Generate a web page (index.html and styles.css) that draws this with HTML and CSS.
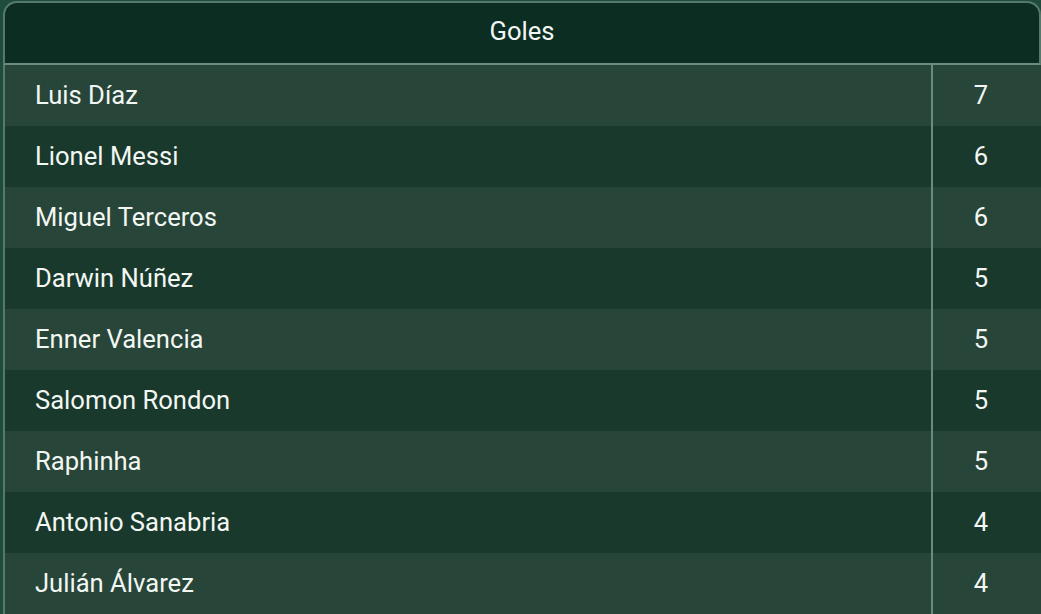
FILE: index.html
```html
<!DOCTYPE html>
<html lang="es">
<head>
<meta charset="utf-8">
<title>Goles</title>
<link rel="stylesheet" href="styles.css">
</head>
<body>
<div class="wrap">
<table class="scorers">
  <thead>
    <tr><th colspan="2">Goles</th></tr>
  </thead>
  <tbody>
    <tr><td class="name">Luis Díaz</td><td class="num">7</td></tr>
    <tr><td class="name">Lionel Messi</td><td class="num">6</td></tr>
    <tr><td class="name">Miguel Terceros</td><td class="num">6</td></tr>
    <tr><td class="name">Darwin Núñez</td><td class="num">5</td></tr>
    <tr><td class="name">Enner Valencia</td><td class="num">5</td></tr>
    <tr><td class="name">Salomon Rondon</td><td class="num">5</td></tr>
    <tr><td class="name">Raphinha</td><td class="num">5</td></tr>
    <tr><td class="name">Antonio Sanabria</td><td class="num">4</td></tr>
    <tr><td class="name">Julián Álvarez</td><td class="num">4</td></tr>
  </tbody>
</table>
</div>
</body>
</html>
```
FILE: styles.css
```css
html, body {
  margin: 0;
  padding: 0;
  background: #1d4c3c;
  font-family: Roboto, "Liberation Sans", sans-serif;
  overflow: hidden;
}
.wrap {
  padding: 1px 0 0 3px;
}
.scorers {
  width: 1038px;
  border-collapse: separate;
  border-spacing: 0;
  color: #f2f7f3;
  font-size: 25.6px;
  line-height: 1.2;
}
.scorers th {
  background: #0c2e22;
  font-weight: 400;
  height: 64px;
  padding: 0 0 4px 0;
  box-sizing: border-box;
  text-align: center;
  border-top: 2px solid #567a6a;
  border-left: 2px solid #567a6a;
  border-right: 2px solid #567a6a;
  border-bottom: 2px solid #6a8c7d;
  border-radius: 14px 14px 0 0;
  vertical-align: middle;
}
.scorers td {
  height: 61px;
  padding: 0 0 1px 0;
  box-sizing: border-box;
  vertical-align: middle;
}
.scorers tbody tr:nth-child(odd) td { background: #284539; }
.scorers tbody tr:nth-child(even) td { background: #1a392d; }
.scorers td.name {
  padding-left: 30px;
  border-left: 2px solid #567a6a;
  width: 928px;
}
.scorers td.num {
  text-align: center;
  border-left: 2px solid #6a8c7d;
  padding-right: 12px;
}
```
